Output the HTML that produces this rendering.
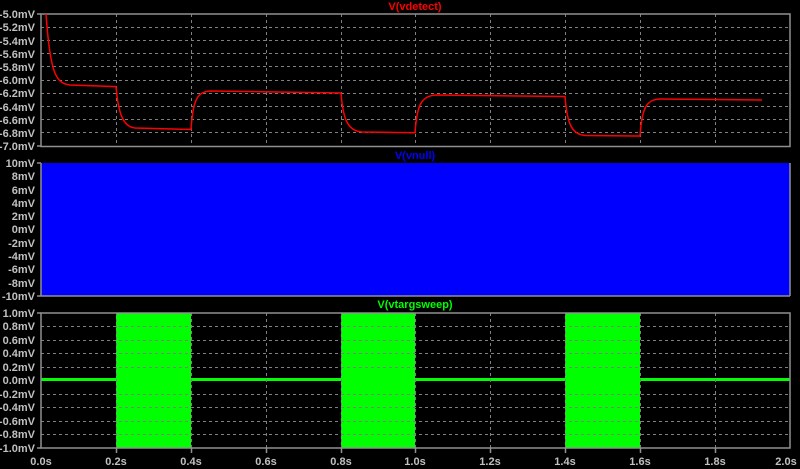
<!DOCTYPE html><html><head><style>body{margin:0;background:#000;width:800px;height:469px;overflow:hidden}svg{display:block}text{font-family:"Liberation Sans",sans-serif;font-size:11px;font-weight:bold}</style></head><body>
<svg width="800" height="469" viewBox="0 0 800 469">
<rect width="800" height="469" fill="#000"/>
<!-- pane 2 blue -->
<rect x="41" y="163" width="749" height="133" fill="#0000ff"/>
<!-- pane3 green -->
<rect x="116" y="313" width="75" height="135" fill="#00ff00"/>
<rect x="341" y="313" width="74" height="135" fill="#00ff00"/>
<rect x="565" y="313" width="75" height="135" fill="#00ff00"/>
<rect x="41" y="378" width="749" height="3" fill="#00ff00"/>
<g stroke="#808080" stroke-dasharray="3,3" stroke-width="1">
<path d="M116.5 14V146M191.5 14V146M266.5 14V146M341.5 14V146M415.5 14V146M490.5 14V146M565.5 14V146M640.5 14V146M715.5 14V146"/>
<path d="M41 27.5H790M41 40.5H790M41 53.5H790M41 66.5H790M41 80.5H790M41 93.5H790M41 106.5H790M41 119.5H790M41 132.5H790"/>
<path d="M116.5 313V448M191.5 313V448M266.5 313V448M341.5 313V448M415.5 313V448M490.5 313V448M565.5 313V448M640.5 313V448M715.5 313V448"/>
<path d="M41 326.5H790M41 340.5H790M41 353.5H790M41 367.5H790M41 394.5H790M41 407.5H790M41 421.5H790M41 434.5H790"/>
</g>
<g fill="none" stroke="#909090" stroke-width="1.5">
<rect x="41" y="14" width="749" height="132.5"/>
<path d="M41 296H790M41 163V296M790 163V296"/>
<rect x="41" y="313" width="749" height="135"/>
</g>
<path d="M46,14 C50,70 55,84 70,85 L116,86.6 C118,110 122,127 135,128 L191,129.5 C193,100 197,92 210,91 L341,93 C343,118 347,131 362,132 L415,132.8 C417,105 421,96 436,95 L565,96.5 C567,122 571,135 586,135.5 L640,136 C642,108 646,99 661,99 L762,100" fill="none" stroke="#ff0000" stroke-width="1.5"/>
<g fill="#c0c0c0" text-anchor="end">
<text x="35" y="18">-5.0mV</text><text x="35" y="31">-5.2mV</text><text x="35" y="45">-5.4mV</text><text x="35" y="58">-5.6mV</text><text x="35" y="71">-5.8mV</text><text x="35" y="84">-6.0mV</text><text x="35" y="97">-6.2mV</text><text x="35" y="111">-6.4mV</text><text x="35" y="124">-6.6mV</text><text x="35" y="137">-6.8mV</text><text x="35" y="150">-7.0mV</text>
<text x="35" y="167">10mV</text><text x="35" y="180">8mV</text><text x="35" y="194">6mV</text><text x="35" y="207">4mV</text><text x="35" y="220">2mV</text><text x="35" y="233">0mV</text><text x="35" y="247">-2mV</text><text x="35" y="260">-4mV</text><text x="35" y="273">-6mV</text><text x="35" y="287">-8mV</text><text x="35" y="300">-10mV</text>
<text x="35" y="317">1.0mV</text><text x="35" y="330">0.8mV</text><text x="35" y="344">0.6mV</text><text x="35" y="357">0.4mV</text><text x="35" y="371">0.2mV</text><text x="35" y="384">0.0mV</text><text x="35" y="398">-0.2mV</text><text x="35" y="411">-0.4mV</text><text x="35" y="425">-0.6mV</text><text x="35" y="438">-0.8mV</text><text x="35" y="452">-1.0mV</text>
</g>
<g fill="#c0c0c0" text-anchor="middle">
<text x="41" y="465">0.0s</text><text x="116" y="465">0.2s</text><text x="191" y="465">0.4s</text><text x="266" y="465">0.6s</text><text x="341" y="465">0.8s</text><text x="415" y="465">1.0s</text><text x="490" y="465">1.2s</text><text x="565" y="465">1.4s</text><text x="640" y="465">1.6s</text><text x="715" y="465">1.8s</text><text x="786" y="465">2.0s</text>
</g>
<g stroke="#909090" stroke-width="1.5"><path d="M116.5 448V453M191.5 448V453M266.5 448V453M341.5 448V453M415.5 448V453M490.5 448V453M565.5 448V453M640.5 448V453M715.5 448V453M37 14H41M37 146H41M37 163H41M37 296H41M37 313H41M37 448H41"/></g>
<text x="415" y="10" fill="#ff0000" text-anchor="middle">V(vdetect)</text>
<text x="415" y="159" fill="#0000ff" text-anchor="middle">V(vnull)</text>
<text x="415" y="308" fill="#00ff00" text-anchor="middle">V(vtargsweep)</text>
</svg></body></html>
